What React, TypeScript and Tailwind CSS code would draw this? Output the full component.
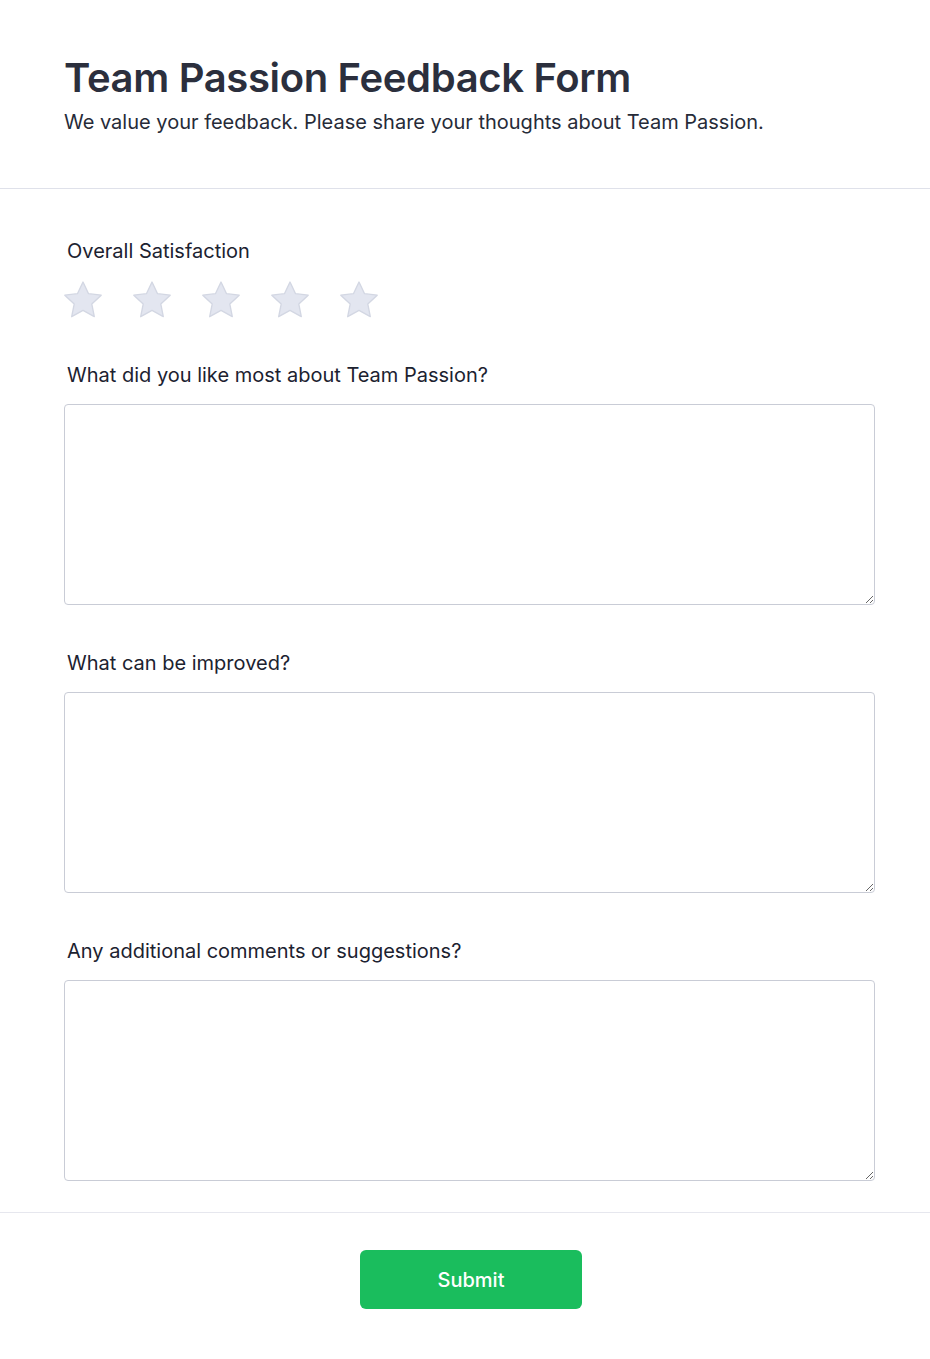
import { useState } from "react";

const questions = [
  "What did you like most about Team Passion?",
  "What can be improved?",
  "Any additional comments or suggestions?",
];

function StarIcon({ active }: { active: boolean }) {
  return (
    <svg viewBox="0 0 24 24" className="w-[46px] h-[46px]">
      <path
        d="M12 2.6l2.9 6.1 6.6.8-4.9 4.6 1.3 6.6L12 17.4l-5.9 3.3 1.3-6.6-4.9-4.6 6.6-.8z"
        fill={active ? "#facc15" : "#e3e6f0"}
        stroke={active ? "#eab308" : "#d3d7e3"}
        strokeWidth="0.7"
        strokeLinejoin="round"
      />
    </svg>
  );
}

export default function App() {
  const [rating, setRating] = useState(0);

  return (
    <div className="min-h-[1359px] bg-white text-[#1f2937] font-['Inter','Noto_Sans',sans-serif]">
      {/* Header */}
      <div className="border-b border-[#dfe1ea] pl-16 pr-[55px] pt-[54px] pb-[52px]">
        <h1 className="text-[40px] leading-[48px] font-semibold text-[#2b2f3d] tracking-[-0.35px]">
          Team Passion Feedback Form
        </h1>
        <p className="mt-[6px] text-xl leading-7 text-[#262b38]">
          We value your feedback. Please share your thoughts about Team Passion.
        </p>
      </div>

      {/* Form body */}
      <div className="border-b border-[#e6e7ee] pl-16 pr-[55px] pt-[48px] pb-[31px]">
        <div className="mb-[38px]">
          <label className="block pl-[3px] text-xl leading-7 text-[#1c2230]">
            Overall Satisfaction
          </label>
          <div className="mt-[12px] -ml-[4px] flex gap-[23px]">
            {[1, 2, 3, 4, 5].map((n) => (
              <button key={n} type="button" onClick={() => setRating(n)}>
                <StarIcon active={n <= rating} />
              </button>
            ))}
          </div>
        </div>

        {questions.map((q) => (
          <div key={q} className="mb-[44px] last:mb-0">
            <label className="block pl-[3px] text-xl leading-7 text-[#1c2230]">
              {q}
            </label>
            <textarea className="mt-[15px] block w-full h-[201px] rounded border border-[#c9ccd6] outline-none p-3 text-base" />
          </div>
        ))}
      </div>

      {/* Footer */}
      <div className="flex justify-center pl-[67px] pr-[55px] pt-[37px] pb-[50px]">
        <button
          type="button"
          className="w-[222px] h-[59px] rounded-md bg-[#1abd5d] text-white text-xl font-medium"
        >
          Submit
        </button>
      </div>
    </div>
  );
}
